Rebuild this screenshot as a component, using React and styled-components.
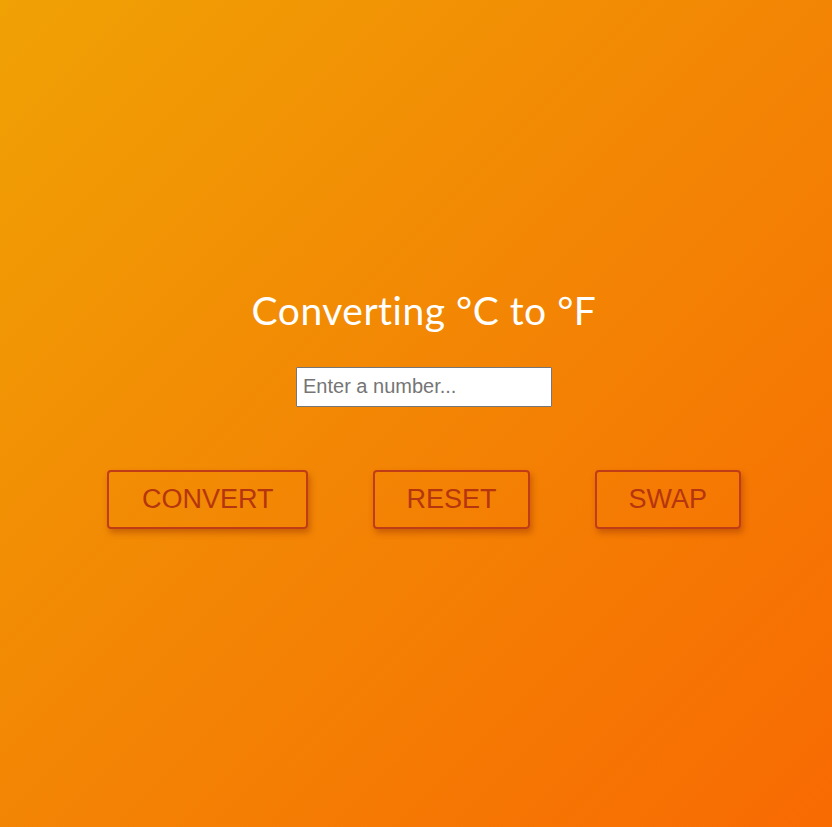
import React, { useState } from "react";
import styled, { createGlobalStyle } from "styled-components";

const GlobalStyle = createGlobalStyle`
  html, body {
    margin: 0;
    padding: 0;
    height: 100%;
  }
  #root {
    min-height: 100vh;
  }
`;

const Page = styled.div`
  min-height: 100vh;
  box-sizing: border-box;
  padding: 0 0 12px 16px;
  display: flex;
  flex-direction: column;
  align-items: center;
  justify-content: center;
  background: linear-gradient(135deg, #f0a104 0%, #f38504 50%, #f86a02 100%);
  font-family: "Liberation Sans", Arial, sans-serif;
`;

const Title = styled.h1`
  margin: 0 0 34px;
  font-family: "Lato", "Open Sans", sans-serif;
  font-weight: 400;
  font-size: 39px;
  letter-spacing: 0.5px;
  color: #fff;
`;

const NumberInput = styled.input`
  width: 256px;
  height: 40px;
  box-sizing: border-box;
  padding: 0 6px;
  border: 1px solid #767676;
  border-radius: 1px;
  font-family: "Liberation Sans", Arial, sans-serif;
  font-size: 20px;
  color: #333;
  &::placeholder {
    color: #757575;
  }
`;

const ButtonRow = styled.div`
  display: flex;
  gap: 65px;
  margin-top: 63px;
`;

const ActionButton = styled.button`
  height: 59px;
  box-sizing: border-box;
  padding: 0 ${(p) => p.$pad || 32}px;
  background: transparent;
  border: 2px solid #c03c16;
  border-radius: 4px;
  box-shadow: 2px 4px 6px rgba(150, 50, 0, 0.45);
  font-family: "Liberation Sans", Arial, sans-serif;
  font-size: 27px;
  color: #b5360e;
  cursor: pointer;
`;

export default function App() {
  const [value, setValue] = useState("");
  return (
    <>
      <GlobalStyle />
      <Page>
        <Title>Converting °C to °F</Title>
        <NumberInput
          type="text"
          placeholder="Enter a number..."
          value={value}
          onChange={(e) => setValue(e.target.value)}
        />
        <ButtonRow>
          <ActionButton $pad={33}>CONVERT</ActionButton>
          <ActionButton $pad={31}>RESET</ActionButton>
          <ActionButton>SWAP</ActionButton>
        </ButtonRow>
      </Page>
    </>
  );
}
